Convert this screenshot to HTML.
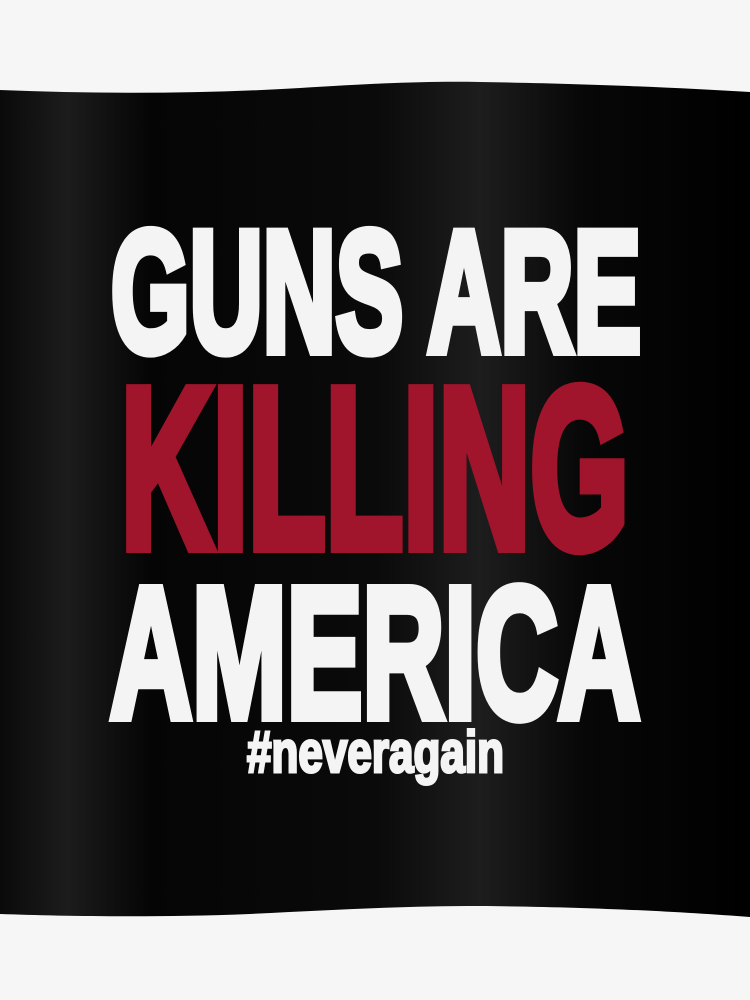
<!DOCTYPE html>
<html><head><meta charset="utf-8"><style>
html,body{margin:0;padding:0;background:#f6f6f6;}
svg{display:block}
</style></head><body>
<svg width="750" height="1000" viewBox="0 0 750 1000" xmlns="http://www.w3.org/2000/svg">
<defs>
<linearGradient id="sh" x1="0" x2="1" y1="0" y2="0">
<stop offset="0" stop-color="#0a0a0a"/>
<stop offset="0.09" stop-color="#1c1c1c"/>
<stop offset="0.2" stop-color="#050505"/>
<stop offset="0.5" stop-color="#0a0a0a"/>
<stop offset="0.64" stop-color="#1d1d1d"/>
<stop offset="0.78" stop-color="#070707"/>
<stop offset="1" stop-color="#000"/>
</linearGradient>
</defs>
<rect width="750" height="1000" fill="#f6f6f6"/>
<path d="M0,90 C100,94 200,94 300,88 C380,83 430,81 480,82 C600,84 680,88 750,92 L750,917 C680,912 600,907 480,906 C400,906 330,910 250,914 C150,918 60,916 0,914 Z" fill="url(#sh)"/>
<g font-family="Liberation Sans, sans-serif" font-weight="bold" stroke-linejoin="miter" stroke-miterlimit="3">
<text x="111" y="351" font-size="172" fill="#f4f4f4" stroke="#f4f4f4" stroke-width="10" textLength="530" lengthAdjust="spacingAndGlyphs">GUNS ARE</text>
<text x="121" y="547" font-size="228" fill="#a0142c" stroke="#a0142c" stroke-width="12" textLength="508" lengthAdjust="spacingAndGlyphs">KILLING</text>
<text x="110" y="717" font-size="186" fill="#f4f4f4" stroke="#f4f4f4" stroke-width="10" textLength="530" lengthAdjust="spacingAndGlyphs">AMERICA</text>
<text x="247" y="772" font-size="58" fill="#f4f4f4" stroke="#f4f4f4" stroke-width="3" textLength="257" lengthAdjust="spacingAndGlyphs">#neveragain</text>
</g>
</svg>
</body></html>
